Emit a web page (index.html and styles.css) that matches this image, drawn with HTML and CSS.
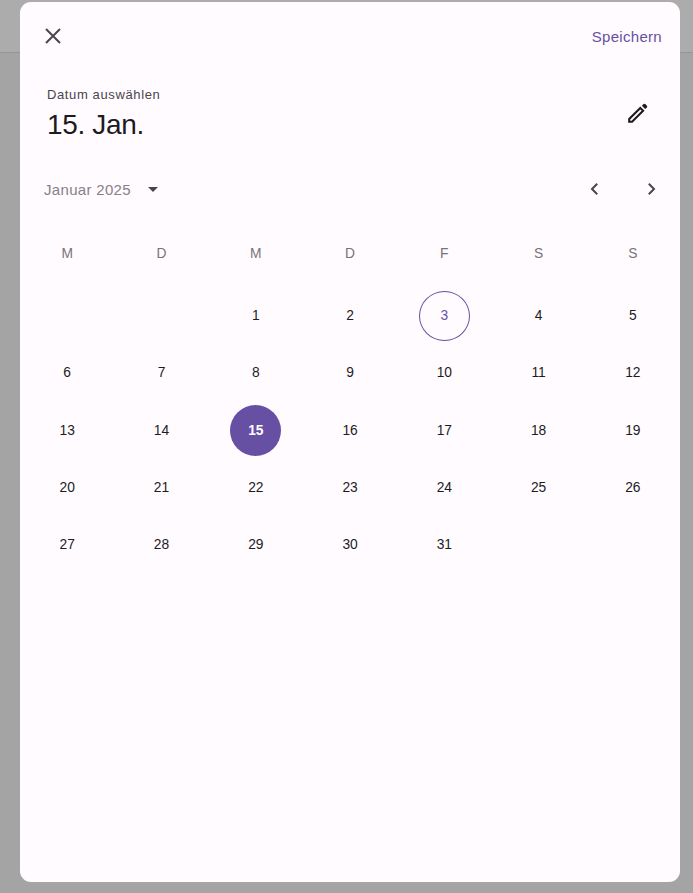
FILE: index.html
```
<!DOCTYPE html>
<html lang="de">
<head>
<meta charset="utf-8">
<title>Datum auswählen</title>
<link rel="stylesheet" href="styles.css">
</head>
<body>
<div class="appbar"></div>
<main class="dialog">
  <header class="toolbar">
    <svg class="close" viewBox="0 0 16 16"><path d="M1 1 15 15M15 1 1 15"/></svg>
    <span class="save">Speichern</span>
  </header>
  <section class="heading">
    <div>
      <div class="label">Datum auswählen</div>
      <h1>15. Jan.</h1>
    </div>
    <svg class="edit" viewBox="0 0 20 20"><path class="outline" d="M1.2 18.8v-2.9L12.3 4.9l2.8 2.8L4.1 18.8z"/><path class="cap" d="M13.9 2.8 15.6 1.1q.8-.8 1.6 0l1.7 1.7q.8.8 0 1.6l-1.7 1.7z"/></svg>
  </section>
  <nav class="month">
    <span class="name">Januar 2025</span>
    <svg class="drop" viewBox="0 0 10 5"><path d="M0 0h10L5 5z"/></svg>
    <svg class="chevron prev" viewBox="0 0 8 12"><path d="M7.2.8 2 6l5.2 5.2"/></svg>
    <svg class="chevron" viewBox="0 0 8 12"><path d="M.8.8 6 6 .8 11.2"/></svg>
  </nav>
  <div class="grid weekdays"><span>M</span><span>D</span><span>M</span><span>D</span><span>F</span><span>S</span><span>S</span></div>
  <div class="grid days">
    <span class="first">1</span><span>2</span><span><b class="today">3</b></span><span>4</span><span>5</span>
    <span>6</span><span>7</span><span>8</span><span>9</span><span>10</span><span>11</span><span>12</span>
    <span>13</span><span>14</span><span><b class="selected">15</b></span><span>16</span><span>17</span><span>18</span><span>19</span>
    <span>20</span><span>21</span><span>22</span><span>23</span><span>24</span><span>25</span><span>26</span>
    <span>27</span><span>28</span><span>29</span><span>30</span><span>31</span>
  </div>
</main>
</body>
</html>
```
FILE: styles.css
```
* { box-sizing: border-box; }
body {
  margin: 0;
  height: 893px;
  padding: 2px 13px 0 20px;
  overflow: hidden;
  background: #a4a4a5;
  font-family: "Liberation Sans", Arial, sans-serif;
  color: #1c1b1f;
}
.appbar {
  position: absolute;
  inset: 0 0 auto;
  height: 53px;
  background: #acacad;
  border-bottom: 1px solid #969697;
}
.dialog {
  position: relative;
  width: 660px;
  height: 880px;
  border-radius: 11px;
  background: #fffbff;
}
svg { display: block; flex: none; }
.toolbar {
  display: flex;
  justify-content: space-between;
  align-items: center;
  height: 69px;
  padding: 0 18px 0 25px;
}
.close {
  width: 16px;
  height: 16px;
  margin-bottom: 1px;
  fill: none;
  stroke: #49454f;
  stroke-width: 2;
}
.save {
  font-size: 15px;
  letter-spacing: .3px;
  color: #6750a4;
}
.heading {
  display: flex;
  justify-content: space-between;
  height: 94px;
  padding: 16px 32px 0 27px;
}
.label {
  font-size: 13px;
  line-height: 16px;
  letter-spacing: .62px;
  color: #49454f;
}
h1 {
  margin: 6px 0 0;
  font-size: 28px;
  line-height: 32px;
  font-weight: 400;
  letter-spacing: -.35px;
}
.edit {
  width: 20px;
  height: 20px;
  margin-top: 16px;
}
.outline { fill: none; stroke: #1c1b1f; stroke-width: 2.1; }
.cap { fill: #1c1b1f; }
.month {
  display: flex;
  align-items: center;
  height: 48px;
  padding: 0 24px;
}
.name {
  font-size: 15px;
  letter-spacing: .32px;
  color: #858187;
}
.drop {
  width: 10px;
  height: 5px;
  margin-left: 17px;
  fill: #49454f;
}
.chevron {
  width: 8px;
  height: 12px;
  fill: none;
  stroke: #49454f;
  stroke-width: 2;
}
.prev { margin: 0 50px 0 auto; }
.grid {
  display: grid;
  grid-template-columns: repeat(7, 1fr);
}
.grid span {
  display: flex;
  align-items: center;
  justify-content: center;
}
.weekdays { height: 80px; font-size: 13.8px; color: #77747a; }
.days {
  grid-auto-rows: 57.25px;
  margin-top: -6px;
  font-size: 13.8px;
  letter-spacing: -.1px;
}
.days .first { grid-column: 3; }
.today, .selected {
  display: flex;
  align-items: center;
  justify-content: center;
  width: 51px;
  height: 51px;
  border-radius: 50%;
  font-weight: 400;
}
.today { height: 50px; border: 1px solid #6750a4; color: #6750a4; }
.selected { background: #6750a4; color: #fff; font-weight: 700; }
```
